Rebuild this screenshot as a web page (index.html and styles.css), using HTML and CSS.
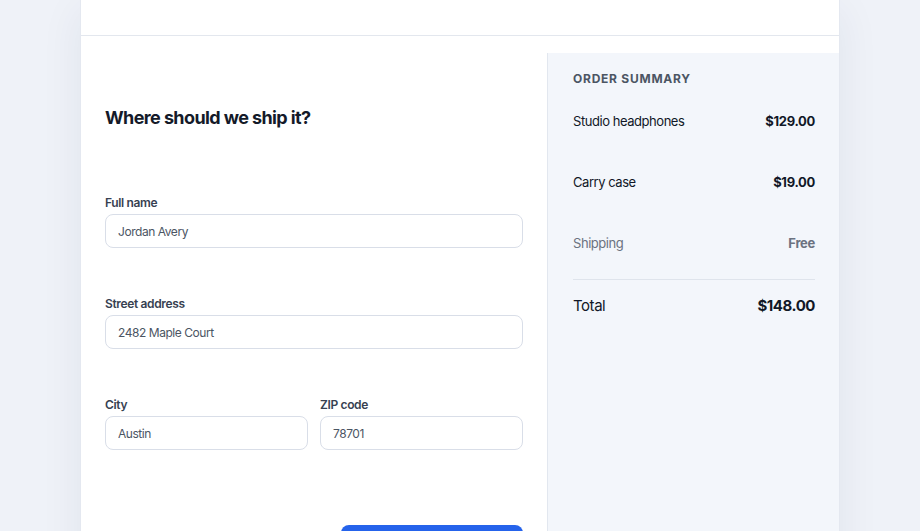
FILE: index.html
```html
<!DOCTYPE html>
<html lang="en">
<head>
<meta charset="UTF-8" />
<meta name="viewport" content="width=device-width, initial-scale=1.0"/>
<title>Checkout - Shipping</title>
<link rel="stylesheet" href="styles.css">
</head>
<body>
<div class="card">
  <div class="card-header"></div>

  <div class="checkout">
    <form class="ship-form">
      <h1>Where should we ship it?</h1>

      <div class="field">
        <label for="fullName">Full name</label>
        <input type="text" id="fullName" value="Jordan Avery" />
      </div>

      <div class="field">
        <label for="street">Street address</label>
        <input type="text" id="street" value="2482 Maple Court" />
      </div>

      <div class="field-row">
        <div class="field">
          <label for="city">City</label>
          <input type="text" id="city" value="Austin" />
        </div>
        <div class="field">
          <label for="zip">ZIP code</label>
          <input type="text" id="zip" value="78701" />
        </div>
      </div>

      <div class="actions">
        <button type="button" class="main-button"></button>
      </div>
    </form>

    <aside class="summary">
      <h2>Order summary</h2>
      <div class="summary-row">
        <span>Studio headphones</span>
        <strong>$129.00</strong>
      </div>
      <div class="summary-row">
        <span>Carry case</span>
        <strong>$19.00</strong>
      </div>
      <div class="summary-row muted">
        <span>Shipping</span>
        <strong>Free</strong>
      </div>
      <div class="summary-total">
        <span>Total</span>
        <strong>$148.00</strong>
      </div>
    </aside>
  </div>
</div>
</body>
</html>
```

FILE: styles.css
```css
* {
  box-sizing: border-box;
}

body {
  font-family: Inter, "Noto Sans", sans-serif;
  margin: 0;
  background: #eff2f8;
  color: #111827;
}

.card {
  width: 760px;
  margin: 0 auto;
  background: white;
  border-left: 1px solid #e4e8f0;
  border-right: 1px solid #e4e8f0;
  box-shadow: 0 10px 40px rgba(30, 41, 80, 0.07);
  min-height: 620px;
}

.card-header {
  height: 36px;
  border-bottom: 1px solid #e3e7ee;
}

.checkout {
  display: grid;
  grid-template-columns: minmax(0, 1fr) 292px;
}

.ship-form {
  padding: 69px 24px 40px;
}

h1 {
  font-size: 18px;
  font-weight: 700;
  line-height: 25px;
  margin: 0 0 64px;
  color: #141a29;
  letter-spacing: -0.6px;
}

.field {
  display: flex;
  flex-direction: column;
  min-width: 0;
  margin-bottom: 47px;
}

.field label {
  font-size: 12px;
  font-weight: 600;
  line-height: 17px;
  letter-spacing: -0.35px;
  color: #374151;
  margin-bottom: 3px;
}

.field input {
  width: 100%;
  min-width: 0;
  height: 34px;
  padding: 0 12px;
  border: 1px solid #d9dee8;
  border-radius: 8px;
  font-family: inherit;
  font-size: 12px;
  letter-spacing: -0.45px;
  color: #4b5563;
  background: white;
}

.field-row {
  display: grid;
  grid-template-columns: 1fr 1fr;
  gap: 12px;
}

.field-row .field {
  margin-bottom: 0;
}

.actions {
  display: flex;
  justify-content: flex-end;
  margin-top: 75px;
}

.main-button {
  width: 182px;
  height: 42px;
  border: none;
  border-radius: 8px;
  background: #2563eb;
  color: white;
  font-family: inherit;
  font-size: 13px;
  font-weight: 600;
}

.summary {
  margin-top: 17px;
  background: #f3f6fb;
  border-left: 1px solid #e2e7ef;
  padding: 18px 24px 40px 25px;
}

.summary h2 {
  font-size: 12px;
  font-weight: 700;
  line-height: 16px;
  letter-spacing: 0.75px;
  text-transform: uppercase;
  color: #4b5563;
  margin: 0 0 24px;
}

.summary-row {
  display: flex;
  justify-content: space-between;
  font-size: 13px;
  line-height: 20px;
  letter-spacing: -0.45px;
  color: #111827;
  margin-bottom: 41px;
}

.summary-row strong {
  font-weight: 700;
  letter-spacing: -0.3px;
}

.summary-row.muted {
  color: #6b7280;
  margin-bottom: 26px;
}

.summary-total {
  display: flex;
  justify-content: space-between;
  border-top: 1px solid #dfe4ec;
  padding-top: 15px;
  font-size: 15px;
  line-height: 22px;
  letter-spacing: -0.45px;
}

.summary-total strong {
  font-weight: 700;
}
```
